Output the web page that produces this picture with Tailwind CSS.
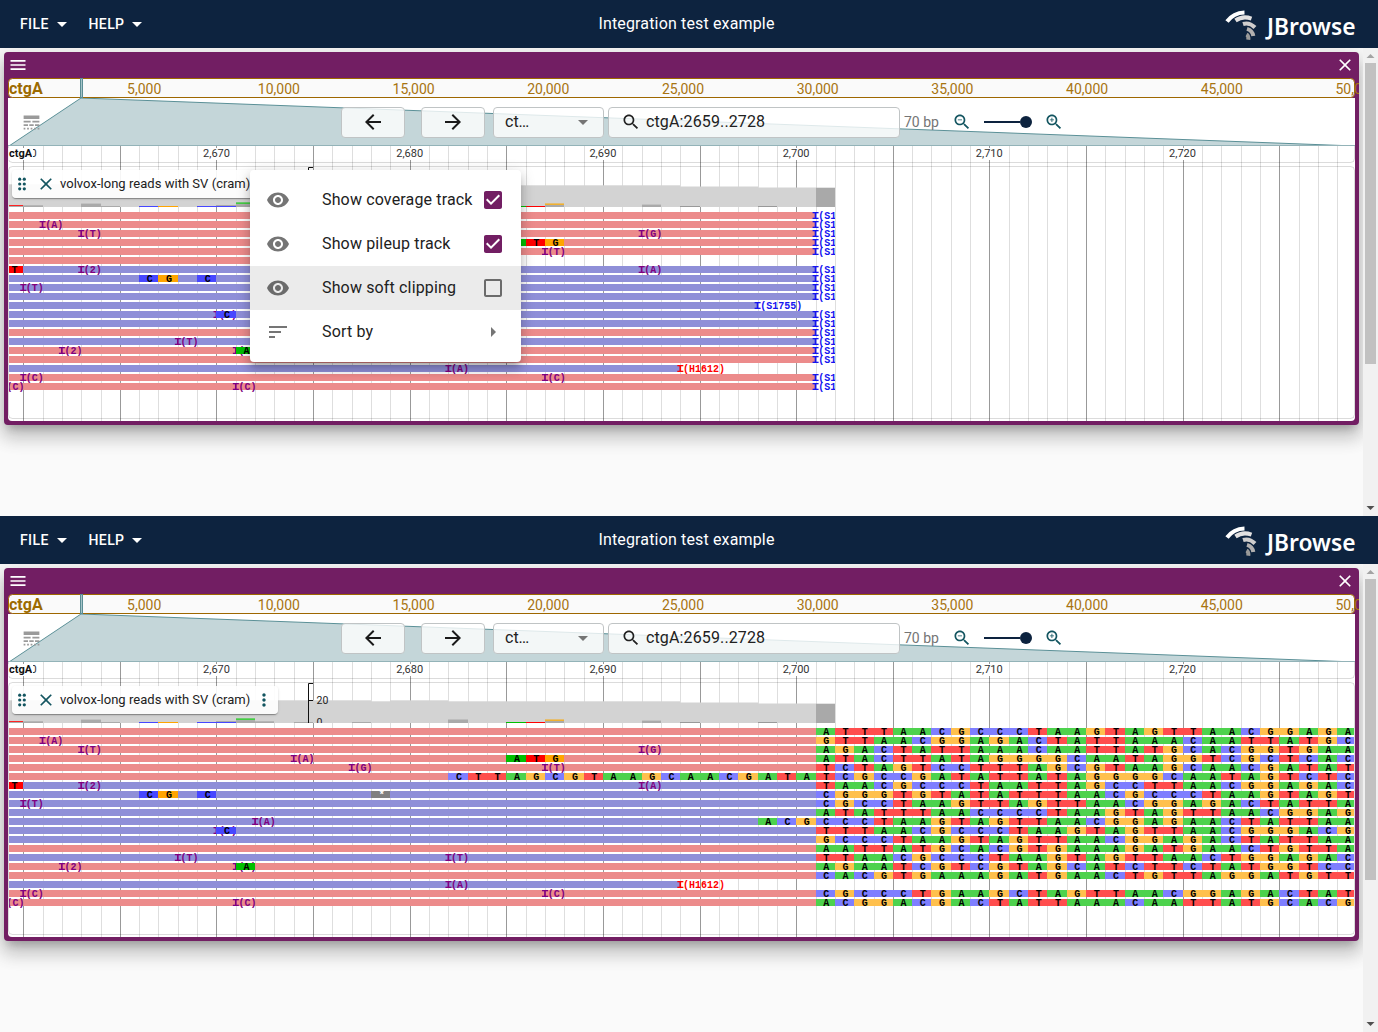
<!DOCTYPE html>
<html lang="en">
<head>
<meta charset="utf-8">
<title>JBrowse</title>
<script src="https://cdn.jsdelivr.net/npm/@tailwindcss/browser@4"></script>
</head>
<body class="w-[1378px] bg-[#fafafa] font-[Roboto,sans-serif] text-[#212121]">
<div id="app" class="flex flex-col"></div>
<script>
const X0 = 23.71, STEP = 19.325, LEFT = 9, RIGHT = 1354;
const xAt = n => Math.max(LEFT, Math.min(RIGHT, Math.floor(X0 + STEP * n)));
const mismatch = { A: '#00bf00', C: '#4747ff', G: '#ffa500', T: '#ff0000' };
const clipped = { A: '#4dd24d', C: '#7e7eff', G: '#ffc04d', T: '#ff4d4d' };
const strands = 'RRRRRRBBBBBBBRBRRBRR';
const softClips = [
  [41, 'ATTTAACGCCCTAAGTAGTTAACGGAGA'], [41, 'GTTAACGGAGACTATTAAACAATTATGC'],
  [41, 'AGACTATTAAACAATTATGCACGGTGAA'], [41, 'ATACTTATAGGGGCAATAGGTCGCTCAC'],
  [41, 'TCTAGTCCTTTAGCGTAAGCAACGATAT'], [22, 'CTTAGCGTAAGCAACGATATCGCCGATATTATAGGGGCAATAGTCTC'],
  [41, 'TAACGCCCTAATTAGCCTTAACGGAGAC'], [41, 'CGGGTGTATATTTAACGCCCTAAGTAGT'],
  [41, 'CGCCTAAGTTAGTTAACGGAGACTATTA'], [41, 'ATATTTAACCCCTAAGTAGTTAACGGAG'],
  [38, 'ACGCCCTAAGTAGTTAACGGAGAACTATTAA'], [41, 'TTTAACGCCCTAAGTAGTTAACGGGACG'],
  [41, 'GCCCTAAGTAGTTAACGGAGACTATTAA'], [41, 'AATTATGCACGTGAAAGATGAACTGTTA'],
  [41, 'TTAACGCCCTAAGTAGTTAACTGGAGAC'], [41, 'AGAATCGTCGTAGCATCTTCTATGGTCC'],
  [41, 'CACGTGAAAGATGAACTGTTAGGATGTT'], [34, ''],
  [41, 'CGCCCTGAAGCTAGTTAACGGAGACTAT'], [41, 'ACGGACGACTATTAAACAATTATGCACG']
];
const insertions = [[1,1,'A'],[2,3,'T'],[2,32,'G'],[3,14,'A'],[4,17,'G'],[4,27,'T'],[6,3,'2'],[6,32,'A'],[8,0,'T'],[10,12,'A'],[11,10,'C'],[14,8,'T'],[14,22,'T'],[15,2,'2'],[15,11,'C'],[17,22,'A'],[18,0,'C'],[18,27,'C'],[19,-1,'C'],[19,11,'C']];
const mismatches = [[3,25,'A'],[3,26,'T'],[3,27,'G'],[6,-1,'T'],[7,6,'C'],[7,7,'G'],[7,9,'C'],[11,10,'C'],[15,11,'A']];

const rect = (x, y, w, h, fill) => `<rect x="${x}" y="${y}" width="${w}" height="${h}" fill="${fill}"/>`;
const rowY = r => 212 + r * 9;

function insertion(row, n, label, color) {
  const x = X0 + STEP * n - 0.35, y = rowY(row);
  return rect(x - 1, y, 1.7, 7, color) + rect(x - 3.1, y, 6, 1.3, color) + rect(x - 3.1, y + 5.7, 6, 1.3, color) +
    `<text x="${x + 2.5}" y="${y + 7}" fill="${color}">(${label})</text>`;
}
function base(row, n, letter, colors) {
  const x = xAt(n), w = xAt(n + 1) - x, y = rowY(row);
  const cx = X0 + STEP * n + 10.1;
  return rect(x, y, w, 7, colors[letter]) + `<text x="${cx}" y="${y + 7}" fill="#000" text-anchor="middle">${letter}</text>`;
}
function coverage() {
  let s = '';
  [[9,371,184.3],[371,390,185.3],[390,448,184.3],[448,680,185.3],[680,758,186.5],[758,816,187.5]].forEach(([a, b, t]) => s += rect(a, t, b - a, 207 - t, '#d3d3d3'));
  s += rect(816, 187.7, 19, 19.3, '#a9a9a9');
  [[-1,205,206,'#f22'],[-1,206,207,'#aaa'],[0,205.3,207,'#aaa'],[3,203.6,207,'#aaa'],[4,206,207,'#aaa'],[6,206,207,'#4747ff'],[7,206,207,'#ffa500'],[9,206,207,'#4747ff'],[10,205,206,'#aaa'],[10,206,207,'#4747ff'],[11,202.3,204.2,'#4c4'],[11,204.2,207,'#aaa'],[12,205.3,207,'#aaa'],[14,206,207,'#aaa'],[17,206,207,'#aaa'],[22,203.5,207,'#aaa'],[25,206,207,'#00bf00'],[26,206,207,'#f00'],[27,203.4,205,'#f0b030'],[27,205,207,'#aaa'],[32,204.6,207,'#aaa'],[34,206,207,'#999'],[38,206,207,'#999']]
    .forEach(([n, t, b, c]) => s += rect(xAt(n), t, xAt(n + 1) - xAt(n), b - t, c));
  return s;
}
function genome(soft, id) {
  let s = '<g shape-rendering="crispEdges">';
  for (let n = 0; n < 70; n++) {
    const x = Math.floor(X0 + STEP * n);
    if (x < RIGHT) s += rect(x, 146, 1, 275, n % 5 ? '#dedede' : '#999');
  }
  s += '</g><rect x="8.5" y="140.5" width="1346" height="22" rx="4" fill="none" stroke="#000" stroke-opacity=".14"/>' +
    '<rect x="8.5" y="166.5" width="1346" height="252" rx="4" fill="none" stroke="#000" stroke-opacity=".14"/>';
  s += '<g font-size="11" fill="#333" text-anchor="middle">';
  for (let n = 0; n <= 60; n += 10) {
    const x = 23.3 + 19.32 * n;
    s += rect(x - 15, 148, 30, 12, '#fff') + `<text x="${x}" y="157">2,${660 + n}</text>`;
  }
  s += '</g>' + rect(9, 148, 24, 11, '#fff') + '<text x="9" y="156.5" font-size="11" font-weight="700" fill="#111">ctgA</text>';
  s += coverage();
  s += `<g font-size="10.5" fill="#222"><path d="M313 167.5h-4.5V207M308.5 184.5h4.5" fill="none" stroke="#111"/><text x="316.5" y="188">20</text><svg x="308" y="190" width="30" height="17" viewBox="308 190 30 17"><text x="316.5" y="209.5">0</text></svg></g>`;
  s += `<clipPath id="reads${id}"><rect x="9" y="205" width="${soft ? 1345 : 826}" height="210"/></clipPath><g clip-path="url(#reads${id})" font-family="Liberation Mono, monospace" font-weight="700" font-size="10">`;
  for (let r = 0; r < 20; r++) {
    s += rect(9, rowY(r), xAt(softClips[r][0]) - 9, 7, strands[r] === 'R' ? '#ec8b8b' : '#8f8fd8');
  }
  insertions.forEach(([r, n, l]) => s += insertion(r, n, l, '#800080'));
  mismatches.forEach(([r, n, l]) => s += base(r, n, l, mismatch));
  s += rect(371, 275, 19, 7, '#808080') + '<text x="381.7" y="281.5" fill="#fff" text-anchor="middle">*</text>';
  s += insertion(17, 34, 'H1612', '#ff0000');
  softClips.forEach(([n, seq], r) => {
    if (!seq) return;
    if (soft) [...seq].forEach((c, i) => s += base(r, n + i, c, clipped));
    else s += insertion(r, n, r === 10 ? 'S1755' : 'S1904', '#1414f0');
  });
  return s + '</g>';
}
function overview() {
  let s = '<rect x="8.5" y="78.5" width="1346" height="19" rx="4" fill="#fafafa" stroke="#9e6700"/>';
  s += '<text x="9" y="94" font-size="16" font-weight="700" fill="#9c6a00">ctgA</text><g font-size="14" fill="#a87410" text-anchor="middle">';
  for (let i = 1; i <= 10; i++) s += `<text x="${144.2 + (i - 1) * 134.7}" y="93.7">${i * 5},000</text>`;
  return s + '</g><rect x="80.5" y="78.5" width="2" height="19" fill="#a6c3c8" stroke="#5a8d94"/>';
}
const icon = (size, color, d) => `<svg class="block shrink-0" width="${size}" height="${size}" viewBox="0 0 24 24" fill="${color}"><path d="${d}"/></svg>`;
const EYE = 'M12 4.5C7 4.5 2.73 7.61 1 12c1.73 4.39 6 7.5 11 7.5s9.27-3.11 11-7.5c-1.73-4.39-6-7.5-11-7.5zM12 17c-2.76 0-5-2.24-5-5s2.24-5 5-5 5 2.24 5 5-2.24 5-5 5zm0-8c-1.66 0-3 1.34-3 3s1.34 3 3 3 3-1.34 3-3-1.34-3-3-3z';
const CLOSE = 'M19 6.41L17.59 5 12 10.59 6.41 5 5 6.41 10.59 12 5 17.59 6.41 19 12 13.41 17.59 19 19 17.59 13.41 12z';
const GLASS = 'M15.5 14h-.79l-.28-.27C15.41 12.59 16 11.11 16 9.5 16 5.91 13.09 3 9.5 3S3 5.91 3 9.5 5.91 16 9.5 16c1.61 0 3.09-.59 4.23-1.57l.27.28v.79l5 4.99L20.49 19l-4.99-5zm-6 0C7.01 14 5 11.99 5 9.5S7.01 5 9.5 5 14 7.01 14 9.5 11.99 14 9.5 14z';
const CHECKED = 'M19 3H5c-1.11 0-2 .9-2 2v14c0 1.1.89 2 2 2h14c1.11 0 2-.9 2-2V5c0-1.1-.89-2-2-2zm-9 14l-5-5 1.41-1.41L10 14.17l7.59-7.59L19 8l-9 9z';
const UNCHECKED = 'M19 5v14H5V5h14m0-2H5c-1.1 0-2 .9-2 2v14c0 1.1.9 2 2 2h14c1.1 0 2-.9 2-2V5c0-1.1-.9-2-2-2z';
const DOWN = 'M7 10l5 5 5-5z';

const menuItem = (left, text, right, cls) => `<div class="flex h-11 items-center pl-4 pr-4 ${cls}">${left}<span class="ml-8 flex-1 whitespace-nowrap text-base tracking-[0.15px]">${text}</span>${right}</div>`;
const menu = () => `<div class="absolute left-[250px] top-[170px] h-[192px] w-[271px] rounded bg-white py-2 shadow-[0px_5px_5px_-3px_rgba(0,0,0,0.2),0px_8px_10px_1px_rgba(0,0,0,0.14),0px_3px_14px_2px_rgba(0,0,0,0.12)]">
${menuItem(icon(24, '#757575', EYE), 'Show coverage track', icon(24, '#721e63', CHECKED), '')}
${menuItem(icon(24, '#757575', EYE), 'Show pileup track', icon(24, '#721e63', CHECKED), '')}
${menuItem(icon(24, '#6b6b6b', EYE), 'Show soft clipping', icon(24, '#6b6b6b', UNCHECKED), 'bg-[#ebebeb]')}
${menuItem(icon(24, '#757575', 'M3 18h6v-2H3v2zM3 6v2h18V6H3zm0 7h12v-2H3v2z'), 'Sort by', icon(24, '#757575', 'M10 17l5-5-5-5v10z'), '')}
</div>`;

const trackLabel = () => `<div class="absolute left-3 top-[170px] flex h-7 w-[266px] items-center rounded bg-white/90 shadow-[0px_2px_1px_-1px_rgba(0,0,0,0.2),0px_1px_1px_0px_rgba(0,0,0,0.14),0px_1px_3px_0px_rgba(0,0,0,0.12)]">
<svg class="ml-1 block" width="12" height="16" viewBox="0 0 12 16" fill="#135560"><circle cx="3.7" cy="3.2" r="1.6"/><circle cx="8.3" cy="3.2" r="1.6"/><circle cx="3.7" cy="8" r="1.6"/><circle cx="8.3" cy="8" r="1.6"/><circle cx="3.7" cy="12.8" r="1.6"/><circle cx="8.3" cy="12.8" r="1.6"/></svg>
<span class="ml-2">${icon(20, '#135560', CLOSE)}</span>
<span class="ml-1 w-[190px] whitespace-nowrap text-[13px] tracking-[0.03px]">volvox-long reads with SV (cram)</span>
<span class="ml-1">${icon(20, '#135560', 'M12 8c1.1 0 2-.9 2-2s-.9-2-2-2-2 .9-2 2 .9 2 2 2zm0 2c-1.1 0-2 .9-2 2s.9 2 2 2 2-.9 2-2-.9-2-2-2zm0 6c-1.1 0-2 .9-2 2s.9 2 2 2 2-.9 2-2-.9-2-2-2z')}</span>
</div>`;

const logo = () => `<svg class="block" width="140" height="48" viewBox="1223 0 140 48"><g fill="none" stroke-width="4">
<path d="M1227 21.5C1231 16 1237 12.6 1244.500 12.400" stroke="#fff"/>
<path d="M1235.500 20.500C1240 17.300 1246 16.600 1251.500 18.600" stroke="#e3e1e1"/>
<path d="M1243 24C1247.500 22.500 1251.500 24 1255 27.500" stroke="#cfcdcd"/>
<path d="M1247 28.800C1250.500 29.800 1252.700 32 1253.300 36" stroke="#b2b0b0"/>
<path d="M1246.500 34.500C1248.500 35.500 1248.600 37 1248.300 39.800" stroke="#999"/></g>
<text x="1267" y="35" font-family="Noto Sans, sans-serif" font-size="23.500" font-weight="600" fill="#fff" textLength="88.500" lengthAdjust="spacingAndGlyphs">JBrowse</text></svg>`;

const box = 'flex h-[31px] items-center rounded border border-[#c0c4c5] bg-white/80';
const panel = (soft, id) => `<section class="relative h-[516px] overflow-hidden bg-[#fafafa]">
<header class="relative z-10 grid h-12 grid-cols-[1fr_auto_1fr] items-center bg-[#0d233f] text-white">
  <div class="flex items-center pl-5 text-sm font-medium tracking-[0.4px]">
    <span class="flex w-[68.5px] items-center">FILE<span class="ml-px">${icon(24, '#fff', DOWN)}</span></span><span class="flex items-center">HELP<span class="ml-px">${icon(24, '#fff', DOWN)}</span></span>
  </div>
  <h1 class="-ml-[5px] text-base tracking-[0.15px]">Integration test example</h1>
  <div class="flex justify-end pr-[15px]">${logo()}</div>
</header>
<div class="flex h-[468px]">
  <main class="w-[1363px] overflow-hidden p-1">
    <div class="h-[373px] overflow-hidden rounded bg-[#721e63] px-1 shadow-[0px_7px_8px_-4px_rgba(0,0,0,0.2),0px_12px_17px_2px_rgba(0,0,0,0.14),0px_5px_22px_4px_rgba(0,0,0,0.12)]">
      <div class="flex h-[26px] items-center justify-between">${icon(20, '#fff', 'M3 18h18v-2H3v2zm0-5h18v-2H3v2zm0-7v2h18V6H3z')}${icon(20, '#fff', CLOSE)}</div>
      <svg class="block overflow-visible" width="1347" height="20" viewBox="8 78 1347 20">${overview()}</svg>
      <div class="grid bg-white">
        <svg class="col-start-1 row-start-1 block" width="1347" height="48" viewBox="8 98 1347 48"><path d="M81 98L9 146H1355L82 98Z" fill="#c4d6d9"/><path d="M9 146L81 98L1355 146" fill="none" stroke="#5b9097"/><path d="M8 145.500H1355" stroke="#93b3b8"/></svg>
        <div class="col-start-1 row-start-1 flex h-12 items-center">
          <span class="ml-[12.5px]">${icon(21, '#9a9a9a', 'M3 16h5v-2H3v2zm6.500 0h5v-2h-5v2zm6.500 0h5v-2h-5v2zM3 20h2v-2H3v2zm4 0h2v-2H7v2zm4 0h2v-2h-2v2zm4 0h2v-2h-2v2zm4 0h2v-2h-2v2zM3 12h8v-2H3v2zm10 0h8v-2h-8v2zM3 4v4h18V4H3z')}</span>
          <div class="${box} ml-[299.5px] w-16 justify-center">${icon(24, '#1a1a1a', 'M20 11H7.830l5.590-5.590L12 4l-8 8 8 8 1.410-1.410L7.830 13H20v-2z')}</div>
          <div class="${box} ml-4 w-16 justify-center">${icon(24, '#1a1a1a', 'M12 4l-1.410 1.410L16.170 11H4v2h12.170l-5.580 5.590L12 20l8-8z')}</div>
          <div class="${box} ml-2 w-[111px] justify-between pl-[11px] pr-2"><span>ct…</span>${icon(24, '#757575', DOWN)}</div>
          <div class="${box} ml-1 w-[292px] pl-3">${icon(20, '#212121', GLASS)}<span class="ml-[5px] tracking-[0.13px]">ctgA:2659..2728</span></div>
          <span class="ml-1 w-[48px] text-sm text-[#757575]">70 bp</span>
          ${icon(20, '#135560', GLASS + 'M7 9h5v1H7z')}
          <span class="ml-3 flex w-12 items-center"><i class="h-0.5 w-9 bg-[#0d233f]"></i><i class="h-3 w-3 rounded-full bg-[#0d233f]"></i></span>
          <span class="ml-3">${icon(20, '#135560', GLASS + 'M12 10h-2v2H9v-2H7V9h2V7h1v2h2v1z')}</span>
        </div>
      </div>
      <div class="relative rounded-b bg-white"><svg class="block" width="1347" height="275" viewBox="8 146 1347 275">${genome(soft, id)}</svg></div>
    </div>
  </main>
  <aside class="flex w-[15px] flex-col items-center justify-between bg-[#f1f1f1]">
    <svg class="block" width="15" height="15"><path d="M3.500 10L7.500 6L11.500 10Z" fill="#a3a3a3"/></svg>
    <div class="mb-auto h-[301px] w-[11px] bg-[#c1c1c1]"></div>
    <svg class="block" width="15" height="15"><path d="M3.500 5L7.500 9L11.500 5Z" fill="#505050"/></svg>
  </aside>
</div>
${trackLabel()}
${soft ? '' : menu()}
</section>`;
document.getElementById('app').innerHTML = panel(false, 1) + panel(true, 2);
</script>
</body>
</html>
